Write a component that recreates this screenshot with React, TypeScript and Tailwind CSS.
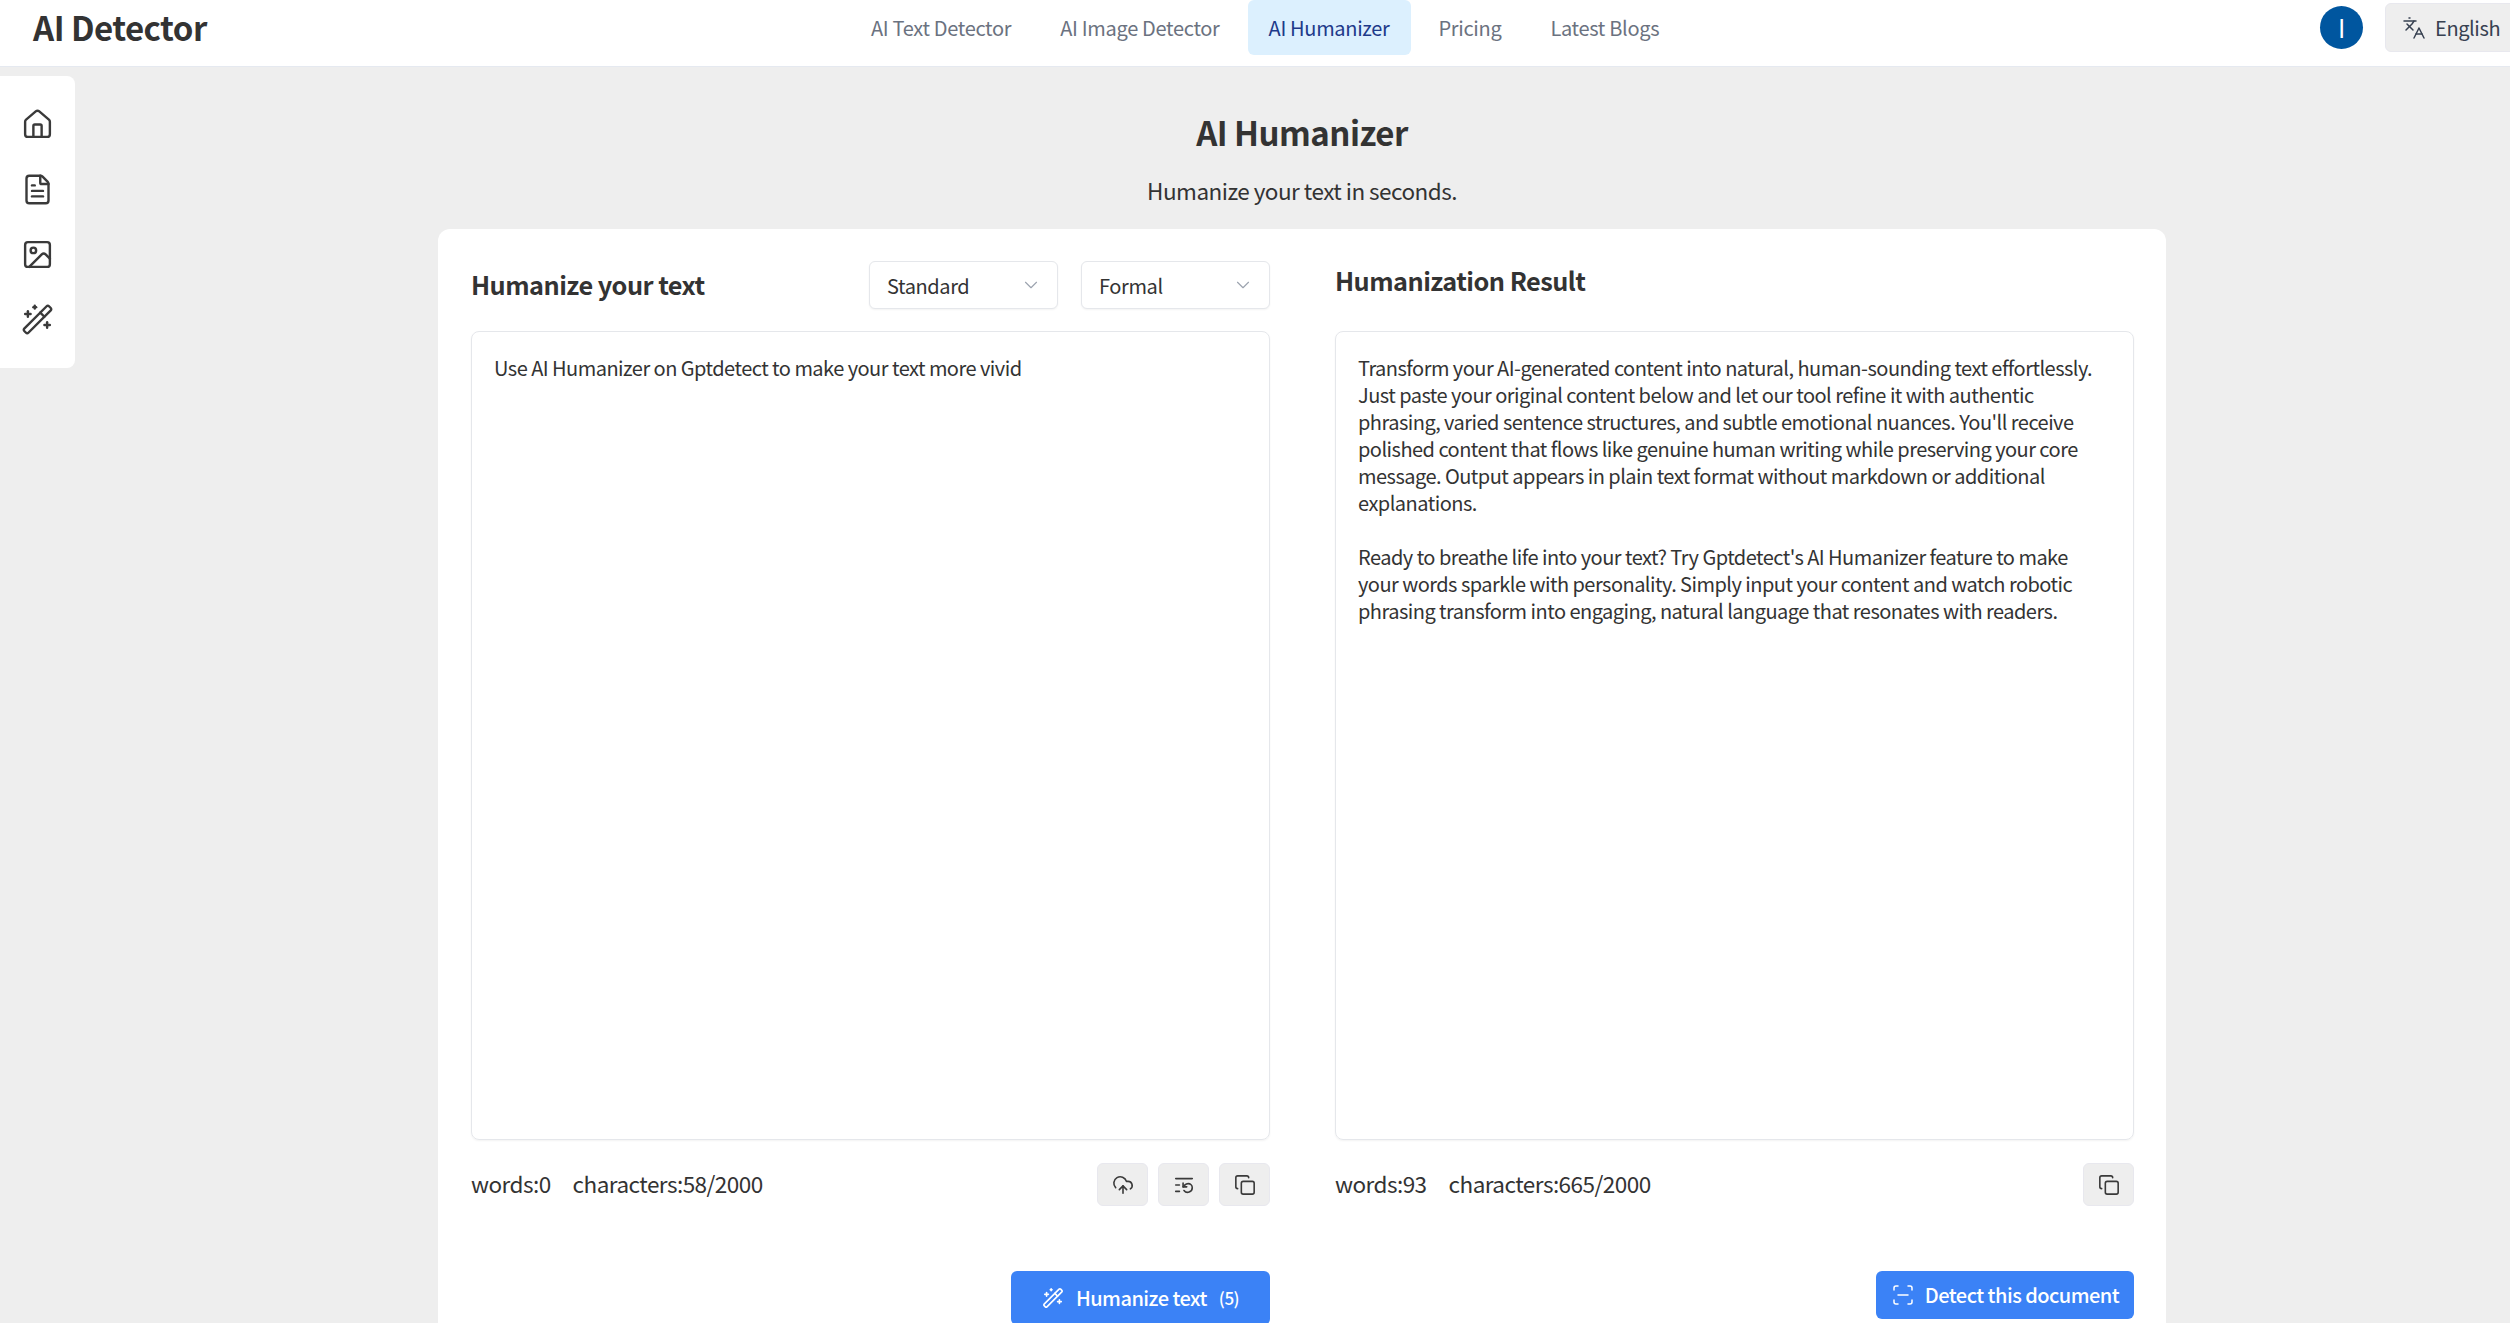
import type { ReactNode } from 'react';
import { ChevronDown, Copy, CloudUpload, FileText, House, Image, Languages, ListRestart, ScanLine, WandSparkles } from 'lucide-react';

const navItems = ['AI Text Detector', 'AI Image Detector', 'AI Humanizer', 'Pricing', 'Latest Blogs'];

const resultText = [
  "Transform your AI-generated content into natural, human-sounding text effortlessly. Just paste your original content below and let our tool refine it with authentic phrasing, varied sentence structures, and subtle emotional nuances. You'll receive polished content that flows like genuine human writing while preserving your core message. Output appears in plain text format without markdown or additional explanations.",
  "Ready to breathe life into your text? Try Gptdetect's AI Humanizer feature to make your words sparkle with personality. Simply input your content and watch robotic phrasing transform into engaging, natural language that resonates with readers.",
];

function Select({ label }: { label: string }) {
  return (
    <div className="flex h-12 w-[189px] items-center justify-between rounded-md border border-[#e5e7eb] bg-white pl-[17px] pr-[15px] text-[20px] tracking-[-0.02em] shadow-[0_1px_2px_rgba(0,0,0,0.05)]">
      <span className="mt-[2px]">{label}</span>
      <ChevronDown className="h-[22px] w-[22px] text-[#9ca3af]" strokeWidth={1.25} />
    </div>
  );
}

function IconButton({ children }: { children: ReactNode }) {
  return (
    <button className="flex h-[43px] w-[51px] items-center justify-center rounded-md border border-[#e8e8ee] bg-[#eeeeee] text-[#3a3a3a]">
      {children}
    </button>
  );
}

export default function App() {
  return (
    <div className="relative h-screen overflow-hidden bg-[#eeeeee] text-[#333333] tracking-[-0.033em] font-['Noto_Sans_CJK_SC','Noto_Sans',sans-serif]">
      {/* Header */}
      <header className="flex h-[67px] items-start border-b border-[#e5e9f0] bg-white pl-[33px]">
        <div className="flex h-[55px] w-[176px] items-center whitespace-nowrap text-[33px] font-semibold leading-none">AI Detector</div>
        <nav className="ml-[641px] flex gap-[7px] tracking-[-0.02em]">
          {navItems.map((item) => (
            <a
              key={item}
              className={
                item === 'AI Humanizer'
                  ? 'flex h-[55px] items-center rounded-md bg-[#dcf0fe] px-[21px] text-[20px] text-[#1e3a8a]'
                  : 'flex h-[55px] items-center rounded-md px-[21px] text-[20px] text-[#6b7280]'
              }
            >
              {item}
            </a>
          ))}
        </nav>
        <div className="ml-auto mr-[-15px] mt-[3px] flex items-center gap-[22px]">
          <div className="flex h-[43px] w-[43px] items-center justify-center rounded-full bg-[#00569f] text-[25px] font-normal leading-none text-white">
            I
          </div>
          <div className="flex h-[49px] w-[140px] items-center gap-[9px] rounded-md border border-[#e8e8ee] bg-[#eeeeee] pl-[16px] text-[20px] tracking-[-0.02em] text-[#374151]">
            <Languages className="h-6 w-6" strokeWidth={1.5} />
            English
          </div>
        </div>
      </header>

      {/* Sidebar */}
      <aside className="absolute left-0 top-[76px] flex h-[292px] w-[75px] flex-col items-center justify-center gap-[32px] rounded-r-lg bg-white text-[#3a3a3a]">
        <House className="h-[33px] w-[33px]" strokeWidth={1.75} />
        <FileText className="h-[33px] w-[33px]" strokeWidth={1.75} />
        <Image className="h-[33px] w-[33px]" strokeWidth={1.75} />
        <WandSparkles className="h-[33px] w-[33px]" strokeWidth={1.75} />
      </aside>

      <main className="ml-[438px] w-[1728px] pt-[45px]">
        <h1 className="text-center text-[33px] font-semibold leading-10">AI Humanizer</h1>
        <p className="mt-[22px] text-center text-[22.5px] leading-8">Humanize your text in seconds.</p>

        <section className="mt-[23px] grid grid-cols-2 gap-x-[65px] rounded-xl bg-white pb-8 pl-[33px] pr-[32px] pt-8">
          {/* Left column */}
          <div>
            <div className="mb-[22px] flex h-12 items-center justify-between">
              <h2 className="text-[25.3px] font-semibold">Humanize your text</h2>
              <div className="flex gap-[23px]">
                <Select label="Standard" />
                <Select label="Formal" />
              </div>
            </div>
            <div className="h-[809px] rounded-lg border border-[#e5e7eb] px-[22px] py-[22px] text-[20px] leading-[27px] shadow-[0_1px_2px_rgba(0,0,0,0.05)]">
              Use AI Humanizer on Gptdetect to make your text more vivid
            </div>
            <div className="mt-[23px] flex items-center justify-between">
              <div className="mt-[-2px] flex gap-[22px] text-[22.5px]">
                <span>words:0</span>
                <span>characters:58/2000</span>
              </div>
              <div className="flex gap-[10px]">
                <IconButton><CloudUpload className="h-[22px] w-[22px]" strokeWidth={1.75} /></IconButton>
                <IconButton><ListRestart className="h-[22px] w-[22px]" strokeWidth={1.75} /></IconButton>
                <IconButton><Copy className="h-[22px] w-[22px]" strokeWidth={1.75} /></IconButton>
              </div>
            </div>
            <div className="mt-[65px] flex justify-end">
              <button className="flex h-[54px] w-[259px] items-center justify-center gap-3 rounded-md bg-[#3b82f6] text-[20px] font-medium text-white">
                <WandSparkles className="h-[22px] w-[22px]" strokeWidth={1.75} />
                <span>Humanize text</span>
                <span className="text-[17px]">(5)</span>
              </button>
            </div>
          </div>

          {/* Right column */}
          <div>
            <div className="mb-[22px] h-12">
              <h2 className="text-[25.3px] font-semibold leading-[38px]">Humanization Result</h2>
            </div>
            <div className="h-[809px] rounded-lg border border-[#e5e7eb] px-[22px] py-[22px] text-[20px] leading-[27px] shadow-[0_1px_2px_rgba(0,0,0,0.05)]">
              <p>{resultText[0]}</p>
              <p className="mt-[27px]">{resultText[1]}</p>
            </div>
            <div className="mt-[23px] flex items-center justify-between">
              <div className="mt-[-2px] flex gap-[22px] text-[22.5px]">
                <span>words:93</span>
                <span>characters:665/2000</span>
              </div>
              <IconButton><Copy className="h-[22px] w-[22px]" strokeWidth={1.75} /></IconButton>
            </div>
            <div className="mt-[65px] flex justify-end">
              <button className="flex h-12 w-[258px] items-center justify-center gap-[10px] rounded-md bg-[#3b82f6] text-[20px] font-medium text-white">
                <ScanLine className="h-6 w-6" strokeWidth={1.5} />
                Detect this document
              </button>
            </div>
          </div>
        </section>
      </main>
    </div>
  );
}
